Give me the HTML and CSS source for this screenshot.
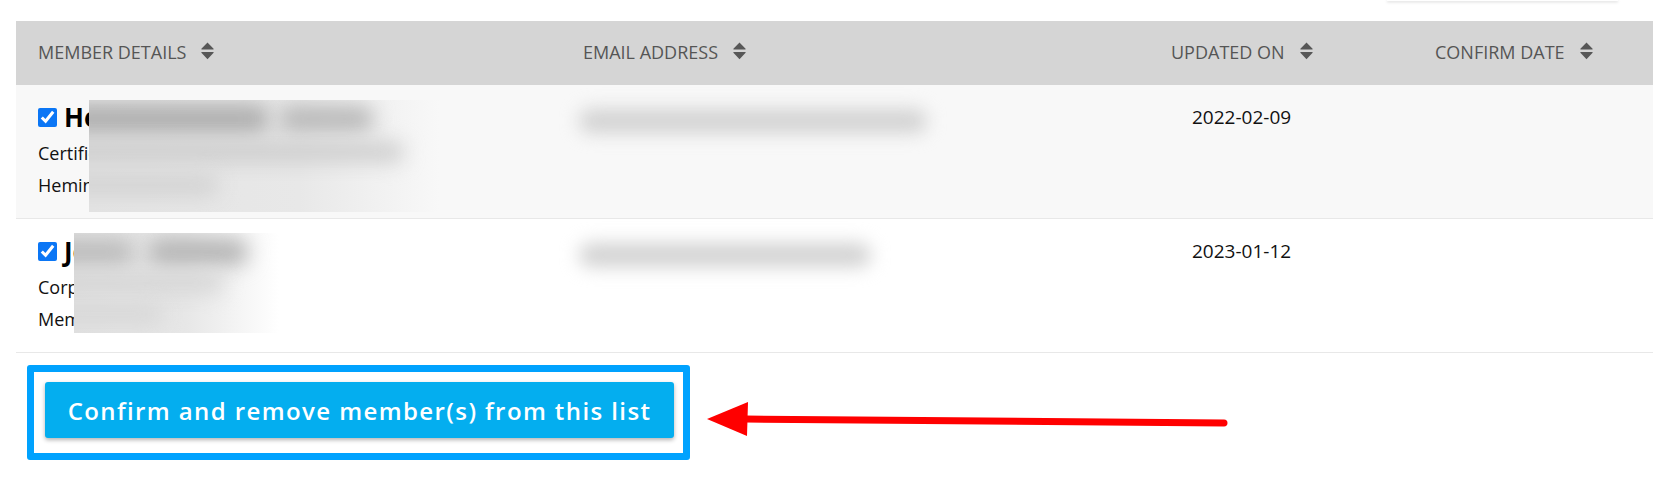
FILE: index.html
```html
<!DOCTYPE html>
<html lang="en">

<head>
    <meta charset="UTF-8" />
    <title>Member List</title>
    <link rel="stylesheet" href="styles.css">
</head>

<body>
    <div class="topbar">
        <div class="filter-box"></div>
    </div>

    <div class="table-wrap">
        <table class="member-table">
            <colgroup>
                <col class="col-details">
                <col class="col-email">
                <col class="col-updated">
                <col class="col-confirm">
            </colgroup>
            <thead>
                <tr>
                    <th><span class="th-label">MEMBER DETAILS<svg class="sort-icon" viewBox="0 0 13 18"><path d="M6.5 0.5 L12.6 6.8 Q13 7.5 12.2 7.5 H0.8 Q0 7.5 0.4 6.8 Z M0.8 10 H12.2 Q13 10 12.6 10.7 L6.5 17.2 L0.4 10.7 Q0 10 0.8 10 Z"/></svg></span></th>
                    <th><span class="th-label">EMAIL ADDRESS<svg class="sort-icon" viewBox="0 0 13 18"><path d="M6.5 0.5 L12.6 6.8 Q13 7.5 12.2 7.5 H0.8 Q0 7.5 0.4 6.8 Z M0.8 10 H12.2 Q13 10 12.6 10.7 L6.5 17.2 L0.4 10.7 Q0 10 0.8 10 Z"/></svg></span></th>
                    <th><span class="th-label">UPDATED ON<svg class="sort-icon" viewBox="0 0 13 18"><path d="M6.5 0.5 L12.6 6.8 Q13 7.5 12.2 7.5 H0.8 Q0 7.5 0.4 6.8 Z M0.8 10 H12.2 Q13 10 12.6 10.7 L6.5 17.2 L0.4 10.7 Q0 10 0.8 10 Z"/></svg></span></th>
                    <th><span class="th-label">CONFIRM DATE<svg class="sort-icon" viewBox="0 0 13 18"><path d="M6.5 0.5 L12.6 6.8 Q13 7.5 12.2 7.5 H0.8 Q0 7.5 0.4 6.8 Z M0.8 10 H12.2 Q13 10 12.6 10.7 L6.5 17.2 L0.4 10.7 Q0 10 0.8 10 Z"/></svg></span></th>
                </tr>
            </thead>
            <tbody>
                <tr class="row-alt">
                    <td class="details-cell">
                        <div class="name-line">
                            <input type="checkbox" checked>
                            <span class="member-name">He</span>
                        </div>
                        <div class="info-line">Certific</div>
                        <div class="info-line">Hemin</div>
                        <div class="redact redact-one">
                            <div class="blob" style="left:-30px;top:4px;width:210px;height:30px;background:#b0b0b0"></div>
                            <div class="blob" style="left:190px;top:6px;width:95px;height:26px;background:#b9b9b9"></div>
                            <div class="blob" style="left:-30px;top:42px;width:345px;height:20px;background:#cdcdcd"></div>
                            <div class="blob" style="left:-30px;top:74px;width:160px;height:22px;background:#d3d3d3"></div>
                        </div>
                    </td>
                    <td>
                        <div class="email-blur">
                            <div class="email-blob" style="width:348px"></div>
                        </div>
                    </td>
                    <td class="date-cell">2022-02-09</td>
                    <td></td>
                </tr>
                <tr>
                    <td class="details-cell">
                        <div class="name-line">
                            <input type="checkbox" checked>
                            <span class="member-name">Jo</span>
                        </div>
                        <div class="info-line">Corpo</div>
                        <div class="info-line">Memb</div>
                        <div class="redact redact-two">
                            <div class="blob" style="left:-30px;top:6px;width:90px;height:26px;background:#bcbcbc"></div>
                            <div class="blob" style="left:74px;top:6px;width:100px;height:26px;background:#b5b5b5"></div>
                            <div class="blob" style="left:-30px;top:40px;width:180px;height:20px;background:#d6d6d6"></div>
                            <div class="blob" style="left:-30px;top:70px;width:120px;height:22px;background:#d8d8d8"></div>
                        </div>
                    </td>
                    <td>
                        <div class="email-blur">
                            <div class="email-blob" style="width:292px"></div>
                        </div>
                    </td>
                    <td class="date-cell">2023-01-12</td>
                    <td></td>
                </tr>
            </tbody>
        </table>

        <div class="action-box">
            <button class="confirm-btn">Confirm and remove member(s) from this list</button>
        </div>
    </div>

    <svg class="arrow" viewBox="0 0 530 50" width="530" height="50">
        <line x1="44" y1="21" x2="522" y2="25" stroke="#ff0000" stroke-width="7" stroke-linecap="round" />
        <polygon points="5,21 46,4 45,38" fill="#ff0000" />
    </svg>
</body>

</html>
```

FILE: styles.css
```css
* {
    margin: 0;
    padding: 0;
    box-sizing: border-box;
}

body {
    position: relative;
    width: 1672px;
    height: 489px;
    overflow: hidden;
    background: #fff;
    font-family: 'Open Sans', 'Noto Sans', sans-serif;
    color: #111;
}

.topbar {
    height: 21px;
    display: flex;
    justify-content: flex-end;
    padding-right: 54px;
}

.filter-box {
    width: 231px;
    height: 1px;
    background: #fff;
    box-shadow: 0 1px 3px rgba(0, 0, 0, 0.25);
}

.table-wrap {
    margin-left: 16px;
    width: 1637px;
}

.member-table {
    width: 1637px;
    table-layout: fixed;
    border-collapse: collapse;
}

.col-details { width: 545px; }
.col-email { width: 588px; }
.col-updated { width: 264px; }
.col-confirm { width: 240px; }

.member-table th {
    height: 64px;
    background: #d5d5d5;
    text-align: left;
    font-weight: 400;
    font-size: 18px;
    color: #555;
    padding: 0 0 2px 22px;
}

.th-label {
    display: inline-flex;
    align-items: center;
    gap: 15px;
    white-space: nowrap;
}

.sort-icon {
    width: 13px;
    height: 18px;
    fill: #575757;
    margin-top: -3px;
}

.member-table td {
    vertical-align: top;
    padding: 16px 22px 17px 22px;
    border-bottom: 1px solid #e8e8e8;
}

.row-alt td {
    background: #f8f8f8;
}

.details-cell {
    position: relative;
    overflow: hidden;
}

.name-line {
    display: flex;
    align-items: center;
    gap: 7px;
    height: 32px;
}

.name-line input {
    width: 19px;
    height: 19px;
    margin: 0;
    accent-color: #0b76f5;
}

.member-name {
    font-size: 26px;
    font-weight: 700;
    line-height: 32px;
    color: #000;
}

.info-line {
    font-size: 18px;
    line-height: 32px;
    color: #111;
}

.name-line + .info-line {
    margin-top: 4px;
}

.redact {
    position: absolute;
    overflow: hidden;
    background: linear-gradient(to right, #e4e4e4 0%, #e8e8e8 60%, rgba(240, 240, 240, 0) 100%);
}

.redact-one {
    left: 73px;
    top: 15px;
    width: 350px;
    height: 112px;
}

.redact-two {
    left: 58px;
    top: 14px;
    width: 205px;
    height: 100px;
    background: linear-gradient(to right, #e2e2e2 0%, #e7e7e7 55%, rgba(245, 245, 245, 0) 100%);
}

.blob {
    position: absolute;
    filter: blur(10px);
    border-radius: 12px;
}

.email-blur {
    margin: 0 0 0 -20px;
    height: 48px;
    width: 400px;
    padding: 8px 0 0 16px;
}

.email-blob {
    height: 24px;
    background: #d2d2d2;
    filter: blur(9px);
    border-radius: 12px;
}

.date-cell {
    font-size: 19px;
    line-height: 32px;
    color: #111;
    padding-left: 43px !important;
}

.action-box {
    display: inline-block;
    margin: 12px 0 0 11px;
    padding: 10px 9px 15px 11px;
    border: 7px solid #00a2fe;
    border-radius: 3px;
}

.confirm-btn {
    display: block;
    width: 629px;
    height: 56px;
    background: #04aeef;
    color: #fff;
    border: none;
    border-radius: 3px;
    box-shadow: 0 2px 4px rgba(0, 0, 0, 0.3);
    font-family: 'Open Sans', sans-serif;
    font-weight: 600;
    font-size: 24px;
    letter-spacing: 1.4px;
    cursor: pointer;
}

.arrow {
    position: absolute;
    left: 702px;
    top: 398px;
    pointer-events: none;
}
```
